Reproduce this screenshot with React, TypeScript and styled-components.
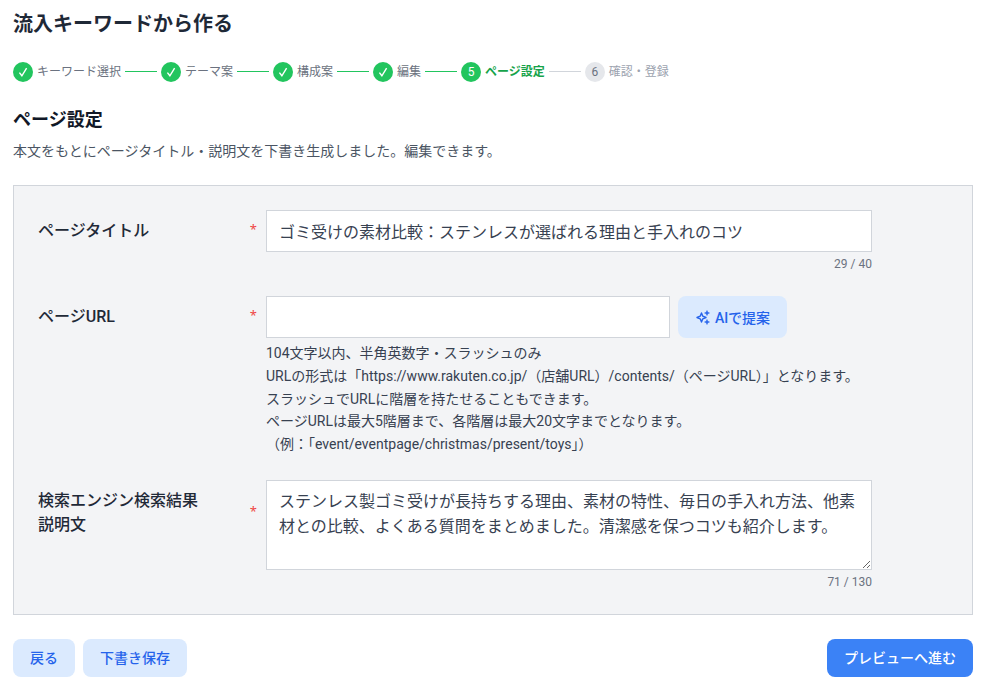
import { Fragment } from "react";
import styled, { createGlobalStyle } from "styled-components";

const steps = [
  { label: "キーワード選択", state: "done" },
  { label: "テーマ案", state: "done" },
  { label: "構成案", state: "done" },
  { label: "編集", state: "done" },
  { label: "ページ設定", state: "current" },
  { label: "確認・登録", state: "todo" },
];

const GlobalStyle = createGlobalStyle`
  * {
    box-sizing: border-box;
  }
  body {
    margin: 0;
    background: #fff;
    font-family: "Roboto", "Noto Sans CJK JP", sans-serif;
    color: #1f2937;
  }
`;

function App() {
  return (
    <Page>
      <GlobalStyle />
      <Title>流入キーワードから作る</Title>
      <Stepper>
        {steps.map((step, i) => (
          <Fragment key={step.label}>
            {i > 0 && <Connector $done={step.state !== "todo"} />}
            <Step>
              <Circle $state={step.state}>
                {step.state === "done" ? (
                  <svg width="12" height="12" viewBox="0 0 12 12" fill="none">
                    <path d="M2.4 6.6 4.9 9.8 9.6 2.2" stroke="#fff" strokeWidth="1.4" />
                  </svg>
                ) : (
                  i + 1
                )}
              </Circle>
              <StepLabel $state={step.state}>{step.label}</StepLabel>
            </Step>
          </Fragment>
        ))}
      </Stepper>

      <SectionTitle>ページ設定</SectionTitle>
      <Lead>本文をもとにページタイトル・説明文を下書き生成しました。編集できます。</Lead>

      <Panel>
        <Row>
          <LabelCell>
            <Label>ページタイトル</Label>
            <Star>*</Star>
          </LabelCell>
          <Field>
            <TextInput defaultValue="ゴミ受けの素材比較：ステンレスが選ばれる理由と手入れのコツ" />
            <Count>29 / 40</Count>
          </Field>
        </Row>
        <Row>
          <LabelCell>
            <Label>ページURL</Label>
            <Star>*</Star>
          </LabelCell>
          <Field>
            <UrlLine>
              <UrlInput />
              <AiButton>
                <svg width="16" height="16" viewBox="0 0 16 16" fill="none" stroke="#2563eb">
                  <path d="M6.5 4 7.8 7.2 11 8.5 7.8 9.8 6.5 13 5.2 9.8 2 8.5 5.2 7.2Z" strokeWidth="1.4" strokeLinejoin="round" />
                  <path d="M12 1.5 12.7 3.3 14.5 4 12.7 4.7 12 6.5 11.3 4.7 9.5 4 11.3 3.3Z" fill="#2563eb" strokeWidth="0.5" />
                  <path d="M12 10.5 12.7 12.3 14.5 13 12.7 13.7 12 15.5 11.3 13.7 9.5 13 11.3 12.3Z" fill="#2563eb" strokeWidth="0.5" />
                </svg>
                AIで提案
              </AiButton>
            </UrlLine>
            <Help>
              104文字以内、半角英数字・スラッシュのみ
              <br />
              URLの形式は「https://www.rakuten.co.jp/（店舗URL）/contents/（ページURL）」となります。
              <br />
              スラッシュでURLに階層を持たせることもできます。
              <br />
              ページURLは最大5階層まで、各階層は最大20文字までとなります。
              <br />
              （例：「event/eventpage/christmas/present/toys」）
            </Help>
          </Field>
        </Row>
        <Row>
          <LabelCell>
            <Label>
              検索エンジン検索結果
              <br />
              説明文
            </Label>
            <Star>*</Star>
          </LabelCell>
          <Field>
            <TextArea defaultValue="ステンレス製ゴミ受けが長持ちする理由、素材の特性、毎日の手入れ方法、他素材との比較、よくある質問をまとめました。清潔感を保つコツも紹介します。" />
            <Count>71 / 130</Count>
          </Field>
        </Row>
      </Panel>

      <Footer>
        <FooterLeft>
          <SoftButton>戻る</SoftButton>
          <SoftButton>下書き保存</SoftButton>
        </FooterLeft>
        <PrimaryButton>プレビューへ進む</PrimaryButton>
      </Footer>
    </Page>
  );
}

export default App;

const Page = styled.div`
  width: 984px;
  height: 693px;
  padding: 10px 11px 0 13px;
  overflow: hidden;
`;

const Title = styled.h1`
  margin: 0;
  font-size: 20px;
  line-height: 28px;
  font-weight: 700;
  color: #1f2937;
`;

const Stepper = styled.div`
  display: flex;
  align-items: center;
  margin-top: 23px;
  height: 20px;
  padding-top: 1px;
`;

const Step = styled.div`
  display: flex;
  align-items: center;
  gap: 4px;
`;

const Circle = styled.div<{ $state: string }>`
  width: 20px;
  height: 20px;
  border-radius: 50%;
  display: flex;
  align-items: center;
  justify-content: center;
  font-size: 12px;
  font-weight: 400;
  background: ${(p) => (p.$state === "todo" ? "#e5e7eb" : "#22c55e")};
  color: ${(p) => (p.$state === "todo" ? "#6b7280" : "#fff")};
`;

const StepLabel = styled.span<{ $state: string }>`
  font-size: 12px;
  line-height: 16px;
  font-weight: ${(p) => (p.$state === "current" ? 700 : 400)};
  color: ${(p) =>
    p.$state === "current"
      ? "#16a34a"
      : p.$state === "todo"
        ? "#9ca3af"
        : "#6b7280"};
`;

const Connector = styled.div<{ $done: boolean }>`
  width: 32px;
  height: 1px;
  margin: 0 4px;
  background: ${(p) => (p.$done ? "#22c55e" : "#d1d5db")};
`;

const SectionTitle = styled.h2`
  margin: 25px 0 0;
  font-size: 18px;
  line-height: 28px;
  font-weight: 700;
  color: #111827;
`;

const Lead = styled.p`
  margin: 7px 0 0;
  font-size: 14px;
  line-height: 20px;
  color: #4b5563;
`;

const Panel = styled.section`
  margin-top: 24px;
  height: 430px;
  padding: 24px 100px 0 24px;
  background: #f3f4f6;
  border: 1px solid #d1d5db;
  display: flex;
  flex-direction: column;
  gap: 24px;
`;

const Row = styled.div`
  display: flex;
  align-items: flex-start;
`;

const LabelCell = styled.div`
  flex: none;
  width: 228px;
  padding: 9px 9px 0 0;
  display: flex;
  align-items: center;
  justify-content: space-between;
`;

const Label = styled.div`
  font-size: 16px;
  line-height: 24px;
  font-weight: 500;
  color: #1f2937;
`;

const Star = styled.span`
  margin-top: -4px;
  font-family: "Noto Sans", sans-serif;
  font-size: 13px;
  line-height: 24px;
  color: #ef4444;
`;

const Field = styled.div`
  flex: 1;
  min-width: 0;
`;

const TextInput = styled.input`
  display: block;
  width: 100%;
  height: 42px;
  padding: 0 12px;
  border: 1px solid #d1d5db;
  background: #fff;
  font: inherit;
  font-size: 16px;
  color: #374151;
  outline: none;
`;

const UrlInput = styled(TextInput)`
  flex: none;
  width: 404px;
`;

const TextArea = styled.textarea`
  display: block;
  width: 100%;
  height: 90px;
  padding: 8px 12px;
  border: 1px solid #d1d5db;
  background: #fff;
  font: inherit;
  font-size: 16px;
  line-height: 25px;
  color: #374151;
  outline: none;
`;

const Count = styled.div`
  margin-top: 4px;
  text-align: right;
  font-size: 12px;
  line-height: 16px;
  color: #6b7280;
`;

const UrlLine = styled.div`
  display: flex;
  gap: 8px;
`;

const AiButton = styled.button`
  flex: none;
  width: 109px;
  height: 42px;
  display: flex;
  align-items: center;
  justify-content: center;
  gap: 4px;
  padding: 0 0 1px;
  border: none;
  border-radius: 8px;
  background: #dbeafe;
  color: #2563eb;
  font: inherit;
  font-size: 14px;
  font-weight: 500;
`;

const Help = styled.p`
  margin: 4px 0 0;
  font-size: 14px;
  line-height: 22.75px;
  color: #374151;
`;

const Footer = styled.div`
  margin-top: 24px;
  display: flex;
  justify-content: space-between;
`;

const FooterLeft = styled.div`
  display: flex;
  gap: 8px;
`;

const SoftButton = styled.button`
  height: 38px;
  padding: 0 17px 2px;
  border: none;
  border-radius: 8px;
  background: #dbeafe;
  color: #2563eb;
  font: inherit;
  font-size: 14px;
  font-weight: 500;
`;

const PrimaryButton = styled(SoftButton)`
  background: #3b82f6;
  color: #fff;
`;
